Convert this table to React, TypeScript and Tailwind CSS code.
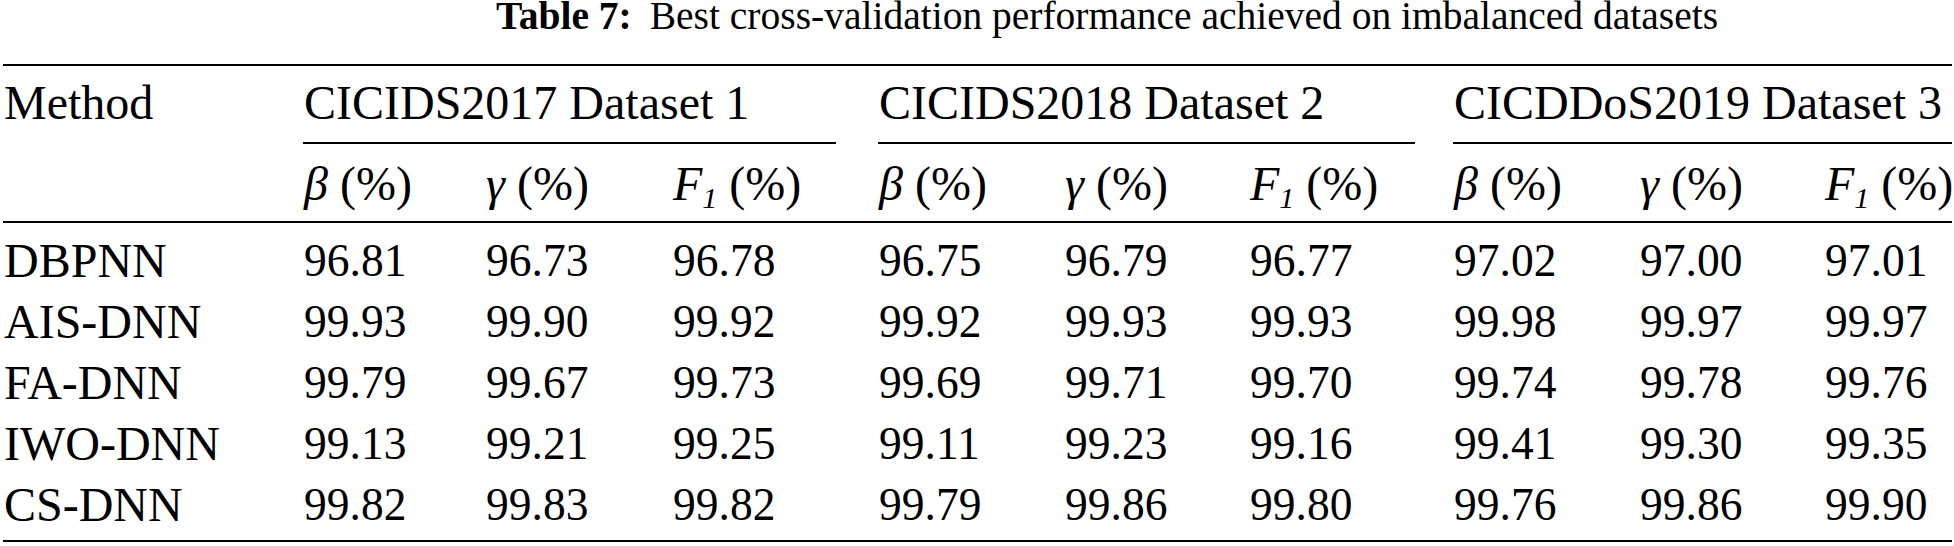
import React from "react";

const cols =
  "grid grid-cols-[301px_182px_187px_206px_186px_185px_204px_186px_185px_127px]";

const rows: [string, string[]][] = [
  ["DBPNN", ["96.81", "96.73", "96.78", "96.75", "96.79", "96.77", "97.02", "97.00", "97.01"]],
  ["AIS-DNN", ["99.93", "99.90", "99.92", "99.92", "99.93", "99.93", "99.98", "99.97", "99.97"]],
  ["FA-DNN", ["99.79", "99.67", "99.73", "99.69", "99.71", "99.70", "99.74", "99.78", "99.76"]],
  ["IWO-DNN", ["99.13", "99.21", "99.25", "99.11", "99.23", "99.16", "99.41", "99.30", "99.35"]],
  ["CS-DNN", ["99.82", "99.83", "99.82", "99.79", "99.86", "99.80", "99.76", "99.86", "99.90"]],
];

function Beta() {
  return (
    <span className="whitespace-nowrap">
      <span className="italic">β</span> (%)
    </span>
  );
}
function Gamma() {
  return (
    <span className="whitespace-nowrap">
      <span className="italic">γ</span> (%)
    </span>
  );
}
function F1() {
  return (
    <span className="whitespace-nowrap">
      <span className="italic">F</span>
      <sub className="italic text-[30px]">1</sub> (%)
    </span>
  );
}

export default function App() {
  return (
    <div className="flex flex-col w-[1954px] h-[546px] bg-white text-black font-['Liberation_Serif','Times_New_Roman',serif] overflow-hidden">
      <div className="-mt-[3px] h-[67px] shrink-0 pl-[496px] text-[39.5px] leading-[39.5px] whitespace-nowrap">
        <span className="font-bold">Table 7:</span>
        <span className="ml-[18px]">Best cross-validation performance achieved on imbalanced datasets</span>
      </div>
      <div className="ml-[3px] w-[1949px] border-t-2 border-b-2 border-black text-[48px] leading-[48px]">
        <div className="border-b-2 border-black">
          <div className={cols}>
            <div className="pt-[13px] pl-[1px] whitespace-nowrap">Method</div>
            <div className="col-span-3 pt-[13px] pb-[15px] mr-[43px] -ml-[1px] pl-[1px] border-b-2 border-black whitespace-nowrap">
              CICIDS2017 Dataset 1
            </div>
            <div className="col-span-3 pt-[13px] pb-[15px] mr-[39px] -ml-[1px] pl-[1px] border-b-2 border-black whitespace-nowrap">
              CICIDS2018 Dataset 2
            </div>
            <div className="col-span-3 pt-[13px] pb-[15px] -ml-[1px] pl-[1px] border-b-2 border-black whitespace-nowrap">
              CICDDoS2019 Dataset 3
            </div>
          </div>
          <div className={`${cols} pt-[16px] pb-[13px]`}>
            <div />
            <div><Beta /></div>
            <div><Gamma /></div>
            <div><F1 /></div>
            <div><Beta /></div>
            <div><Gamma /></div>
            <div><F1 /></div>
            <div><Beta /></div>
            <div><Gamma /></div>
            <div><F1 /></div>
          </div>
        </div>
        <div className="pt-[7px] pb-[5px]">
          {rows.map(([name, vals]) => (
            <div key={name} className={`${cols} h-[61px] leading-[61px]`}>
              <div className="pl-[1px] whitespace-nowrap">{name}</div>
              {vals.map((v, i) => (
                <div key={i} className="text-[45.5px] whitespace-nowrap">
                  {v}
                </div>
              ))}
            </div>
          ))}
        </div>
      </div>
    </div>
  );
}
